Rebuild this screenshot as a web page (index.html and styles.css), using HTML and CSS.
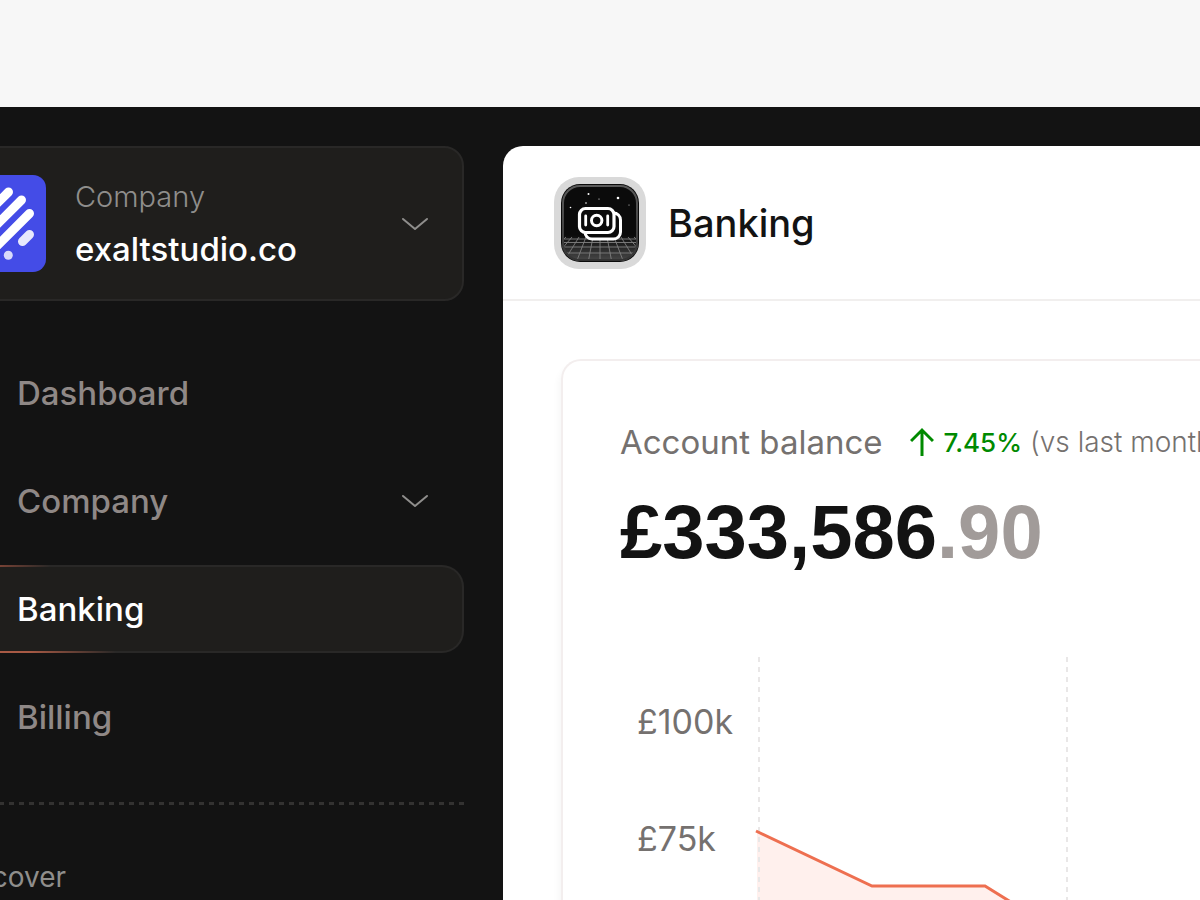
FILE: index.html
```html
<!DOCTYPE html>
<html lang="en">
<head>
<meta charset="utf-8">
<meta name="viewport" content="width=device-width, initial-scale=1">
<title>Banking</title>
<link rel="stylesheet" href="styles.css">
</head>
<body>
<div class="app">
  <aside class="sidebar">
    <button class="switcher" type="button">
      <svg class="logo" viewBox="0 0 97 97" aria-hidden="true">
        <rect width="97" height="97" rx="13" fill="#444ce7"/>
        <g stroke="#fff" stroke-width="9" stroke-linecap="round">
          <path d="M17 59.500 59.500 17M25 72.500 72.500 25M38.500 80.500l42-42"/>
          <path opacity=".88" d="M73.500 66.500l7-7M16.500 37.500l7-7"/>
        </g>
        <g fill="#fff" opacity=".8"><circle cx="59.300" cy="80.300" r="4.500"/><circle cx="37.700" cy="17" r="4.500"/></g>
      </svg>
      <span class="switcher-text">
        <span class="switcher-label">Company</span>
        <span class="switcher-name">exaltstudio.co</span>
      </span>
      <svg class="chevron" viewBox="0 0 28 14" aria-hidden="true"><path d="M2 2l12 10L26 2"/></svg>
    </button>
    <nav class="nav">
      <a class="nav-item" href="#">Dashboard</a>
      <a class="nav-item" href="#">Company
        <svg class="chevron" viewBox="0 0 28 14" aria-hidden="true"><path d="M2 2l12 10L26 2"/></svg>
      </a>
      <a class="nav-item active" href="#" aria-current="page">Banking</a>
      <a class="nav-item" href="#">Billing</a>
    </nav>
    <div class="divider"></div>
    <h2 class="section">Discover</h2>
  </aside>
  <main class="panel">
    <header class="panel-head">
      <svg class="app-icon" viewBox="0 0 92 92" aria-hidden="true">
        <defs>
          <clipPath id="tile"><rect x="8" y="8" width="76" height="76" rx="18"/></clipPath>
          <linearGradient id="floor" x1="0" y1="0" x2="0" y2="1">
            <stop offset="0" stop-color="#fff" stop-opacity="0"/>
            <stop offset="1" stop-color="#fff" stop-opacity=".25"/>
          </linearGradient>
          <linearGradient id="edge" x1="0" y1="0" x2="0" y2="1">
            <stop offset="0" stop-color="#5a5a5a"/>
            <stop offset="1" stop-color="#333"/>
          </linearGradient>
        </defs>
        <rect width="92" height="92" rx="25" fill="#d9d9d9"/>
        <rect x="7" y="7" width="78" height="78" rx="19" fill="#0b0b0b"/>
        <g clip-path="url(#tile)">
          <rect x="8" y="58" width="76" height="26" fill="url(#floor)"/>
          <path fill="none" stroke="#808080" stroke-width=".9" d="M0 62h92M0 65.500h92M0 70h92M0 76h92M46 60v26M39 60 34 86M32 60 22 86M25 60 9 86M18 60-4 86M12 60-16 86M53 60l5 26M60 60l10 26M67 60l16 26M74 60l22 26M80 60l28 26"/>
          <g fill="#fff">
            <circle cx="34.500" cy="17" r="1"/><circle cx="64" cy="21" r="1.300"/><circle cx="32" cy="26" r=".8"/>
            <circle cx="16.500" cy="30.500" r=".8"/><circle cx="45" cy="22" r=".6"/><circle cx="75" cy="28" r=".5"/>
          </g>
        </g>
        <rect x="9" y="9" width="74" height="74" rx="17" fill="none" stroke="url(#edge)" stroke-width="2"/>
        <rect x="31" y="36" width="35.500" height="26" rx="7" fill="#0b0b0b" stroke="#fff" stroke-width="3"/>
        <rect x="25.500" y="31.500" width="34.500" height="24" rx="6" fill="#0b0b0b" stroke="#fff" stroke-width="3.200"/>
        <circle cx="42.700" cy="43.500" r="5.200" fill="none" stroke="#fff" stroke-width="3"/>
        <path d="M31.700 39v9M53.700 39v9" stroke="#fff" stroke-width="2.800" stroke-linecap="round"/>
      </svg>
      <h1 class="title">Banking</h1>
    </header>
    <section class="card">
      <div class="summary">
        <span class="summary-label">Account balance</span>
        <span class="trend">
          <svg class="arrow" viewBox="0 0 24 30" aria-hidden="true"><path d="M12 29V3M1 14 12 3l11 11"/></svg>
          <strong class="trend-value">7.45%</strong>
          <span class="trend-note">(vs last month)</span>
        </span>
      </div>
      <p class="amount">£333,586<span class="pence">.90</span></p>
      <div class="chart">
        <div class="axis"><span>£100k</span><span>£75k</span></div>
        <svg class="plot" width="640" height="300" aria-hidden="true">
          <path d="M3 174 119 229H232L332 300H3z" fill="#fff0ed"/>
          <path class="grid" d="M5 0v300M313 0v300"/>
          <path d="M2 174 118 229H231L331 291" fill="none" stroke="#ee6f50" stroke-width="3"/>
        </svg>
      </div>
    </section>
  </main>
</div>
</body>
</html>
```
FILE: styles.css
```css
* { box-sizing: border-box; }

body {
  margin: 0;
  padding-top: 107px;
  height: 100vh;
  overflow: hidden;
  background: #f7f7f7;
  font-family: Inter, "Liberation Sans", sans-serif;
}

h1, h2, p { margin: 0; }

.app {
  display: flex;
  height: 100%;
  overflow: hidden;
  background: #131313;
}

.sidebar {
  flex: none;
  width: 623px;
  margin-left: -120px;
  padding: 39px 39px 0 40px;
}

.switcher {
  display: flex;
  align-items: center;
  width: 100%;
  padding: 27px 33px 27px 27px;
  border: 2px solid #292827;
  border-radius: 20px;
  background: #1f1e1c;
  color: #fff;
  font: inherit;
  text-align: left;
}

.logo {
  flex: none;
  width: 97px;
  height: 97px;
  margin-right: 29px;
}

.switcher-text {
  display: flex;
  flex: 1;
  flex-direction: column;
  gap: 12px;
  padding-bottom: 2px;
}

.switcher-label {
  color: #8f8e8c;
  font-size: 29px;
  font-weight: 300;
  line-height: 40px;
}

.switcher-name {
  font-size: 33px;
  font-weight: 500;
  line-height: 40px;
}

.chevron {
  width: 28px;
  height: 14px;
  fill: none;
  stroke: #8f8e8c;
  stroke-width: 2;
  stroke-linecap: round;
  stroke-linejoin: round;
}

.nav {
  display: flex;
  flex-direction: column;
  gap: 20px;
  margin-top: 48px;
}

.nav-item {
  display: flex;
  align-items: center;
  justify-content: space-between;
  height: 88px;
  padding: 0 35px 0 97px;
  border-radius: 22px;
  color: #8f8886;
  font-size: 33px;
  font-weight: 500;
  text-decoration: none;
}

.active {
  border: 2px solid transparent;
  padding-left: 95px;
  background:
    linear-gradient(#1f1e1c, #1f1e1c) padding-box,
    linear-gradient(to right, #a85a45 20%, transparent 36%) bottom / 100% 2px no-repeat border-box,
    linear-gradient(to right, #7d4436 14%, transparent 24%) top / 100% 2px no-repeat border-box,
    linear-gradient(#292827, #292827) border-box;
  color: #fff;
}

.divider {
  height: 3px;
  margin-top: 41px;
  background: repeating-linear-gradient(to left, #333231 0 5px, transparent 5px 10px);
}

.section {
  margin-top: 52px;
  padding-left: 30px;
  color: #8f8e8c;
  font-size: 28px;
  font-weight: 400;
  line-height: 40px;
}

.panel {
  flex: 1;
  min-width: 0;
  margin-top: 39px;
  overflow: hidden;
  border-radius: 20px 0 0 0;
  background: #fff;
}

.panel-head {
  display: flex;
  align-items: center;
  gap: 22px;
  padding: 31px 0 30px 51px;
  border-bottom: 2px solid #f1efee;
}

.app-icon {
  width: 92px;
  height: 92px;
}

.title {
  color: #131313;
  font-size: 38px;
  font-weight: 500;
}

.card {
  margin: 58px 0 0 58px;
  padding: 61px 0 0 57px;
  border: 2px solid #f3eeee;
  border-width: 2px 0 0 2px;
  border-radius: 20px 0 0 0;
  box-shadow: -3px 6px 6px #00000008;
  white-space: nowrap;
}

.summary {
  display: flex;
  align-items: center;
  gap: 27px;
  height: 40px;
}

.summary-label {
  color: #75716f;
  font-size: 33px;
  font-weight: 400;
}

.trend {
  display: flex;
  align-items: center;
  gap: 8px;
}

.arrow {
  width: 24px;
  height: 30px;
  margin-right: 2px;
  fill: none;
  stroke: #008a00;
  stroke-width: 3;
}

.trend-value {
  color: #008a00;
  font-size: 26px;
  font-weight: 500;
}

.trend-note {
  color: #75716f;
  font-size: 28px;
  font-weight: 300;
}

.amount {
  margin-top: 28px;
  color: #131313;
  font-family: "Liberation Sans", Arial, sans-serif;
  font-size: 76px;
  font-weight: 700;
  line-height: 84px;
}

.pence { color: #a19b99; }

.chart {
  display: flex;
  margin-top: 83px;
}

.axis {
  display: flex;
  flex: none;
  flex-direction: column;
  gap: 77px;
  width: 134px;
  padding: 45px 0 0 17px;
  color: #75716f;
  font-size: 34px;
  font-weight: 400;
  line-height: 40px;
}

.plot { flex: none; }

.grid {
  stroke: #e9e7e7;
  stroke-width: 2;
  stroke-dasharray: 5 5;
}
```
